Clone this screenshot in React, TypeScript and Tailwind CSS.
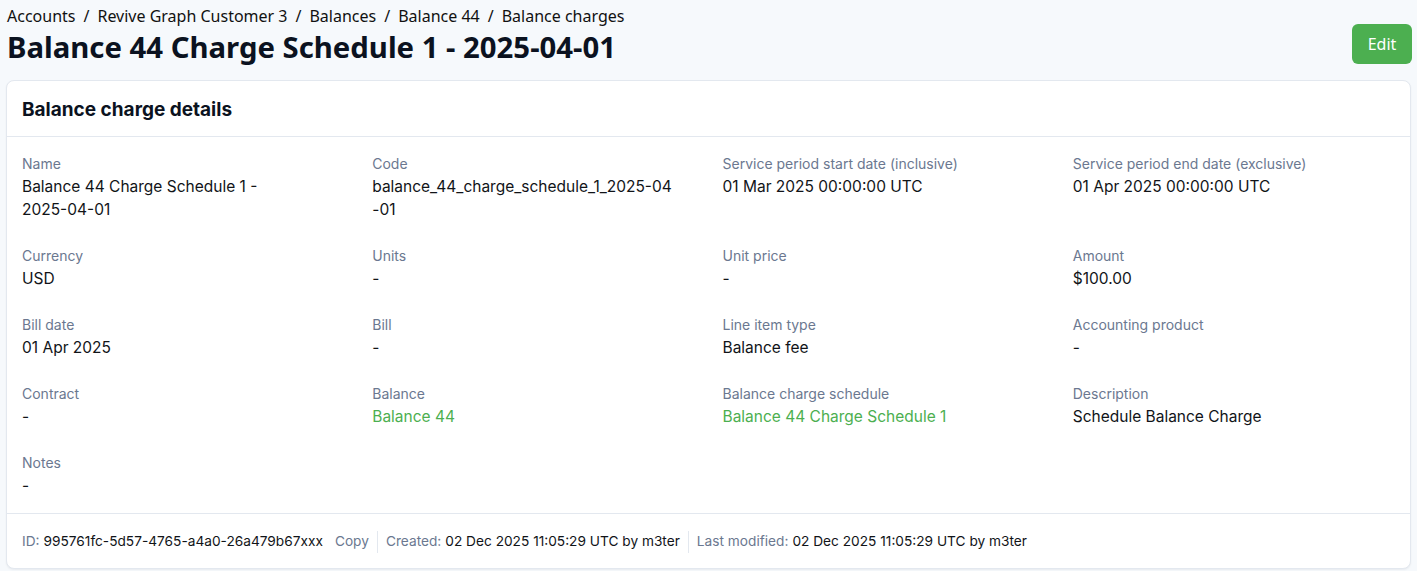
import React from 'react';

type Field = { label: string; value: React.ReactNode; link?: boolean; code?: boolean };

const fields: Field[] = [
  {
    label: 'Name',
    value: (
      <>
        Balance 44 Charge Schedule 1 - <span className="whitespace-nowrap">2025-04-01</span>
      </>
    ),
  },
  { label: 'Code', value: 'balance_44_charge_schedule_1_2025-04-01', code: true },
  { label: 'Service period start date (inclusive)', value: '01 Mar 2025 00:00:00 UTC' },
  { label: 'Service period end date (exclusive)', value: '01 Apr 2025 00:00:00 UTC' },
  { label: 'Currency', value: 'USD' },
  { label: 'Units', value: '-' },
  { label: 'Unit price', value: '-' },
  { label: 'Amount', value: '$100.00' },
  { label: 'Bill date', value: '01 Apr 2025' },
  { label: 'Bill', value: '-' },
  { label: 'Line item type', value: 'Balance fee' },
  { label: 'Accounting product', value: '-' },
  { label: 'Contract', value: '-' },
  { label: 'Balance', value: 'Balance 44', link: true },
  { label: 'Balance charge schedule', value: 'Balance 44 Charge Schedule 1', link: true },
  { label: 'Description', value: 'Schedule Balance Charge' },
  { label: 'Notes', value: '-' },
];

const crumbs = ['Accounts', 'Revive Graph Customer 3', 'Balances', 'Balance 44', 'Balance charges'];

export default function App() {
  return (
    <div className="min-h-[571px] bg-[#f6f9fc] px-[6px] pt-[5px] pb-[2px] font-['Inter',sans-serif] text-[#111418]">
      {/* Header */}
      <div className="flex items-start justify-between">
        <div className="pl-[1px]">
          <div className="font-['Noto_Sans',sans-serif] text-[16px] leading-[22px] text-[#111]">
            {crumbs.map((c, i) => (
              <span key={c}>
                {i > 0 && <span className="mx-[8px]">/</span>}
                {c}
              </span>
            ))}
          </div>
          <h1 className="mt-0 font-['Noto_Sans',sans-serif] text-[29.3px] font-bold leading-[40px] text-[#0b1220]">
            Balance 44 Charge Schedule 1 - 2025-04-01
          </h1>
        </div>
        <button className="mt-[19px] mr-[-1px] h-[40px] w-[60px] rounded-[6px] bg-[#4caf50] font-['Noto_Sans',sans-serif] text-[16px] text-white">
          Edit
        </button>
      </div>

      {/* Card */}
      <div className="mt-[13px] rounded-[8px] border border-[#e3e8ef] bg-white shadow-[0_1px_2px_rgba(16,24,40,0.06)]">
        <div className="flex h-[56px] items-center border-b border-[#e3e8ef] px-[15px] pt-[3px]">
          <h2 className="text-[19px] font-bold text-[#0b1220]">Balance charge details</h2>
        </div>

        <div className="grid grid-cols-4 gap-x-[28px] gap-y-[24px] px-[15px] pt-[16px] pb-[16px]">
          {fields.map((f) => (
            <div key={f.label} className="pr-[2px]">
              <div className="text-[14px] leading-[22px] text-[#6b7890]">{f.label}</div>
              <div
                className={`text-[15.5px] leading-[23px] ${
                  f.code ? 'max-w-[305px] break-all' : 'break-words'
                } ${f.link ? 'text-[#4caf50]' : 'text-[#111418]'}`}
              >
                {f.value}
              </div>
            </div>
          ))}
        </div>

        <div className="flex h-[55px] items-center border-t border-[#e3e8ef] px-[15px] pt-[1px] text-[13.7px]">
          <span className="text-[#6b7890]">ID:</span>
          <span className="ml-[4px] text-[#111418]">995761fc-5d57-4765-a4a0-26a479b67xxx</span>
          <span className="ml-[12px] text-[#6b7890]">Copy</span>
          <span className="mx-[8px] h-[22px] w-px bg-[#e3e8ef]" />
          <span className="text-[#6b7890]">Created:</span>
          <span className="ml-[4px] text-[#111418]">02 Dec 2025 11:05:29 UTC by m3ter</span>
          <span className="mx-[8px] h-[22px] w-px bg-[#e3e8ef]" />
          <span className="text-[#6b7890]">Last modified:</span>
          <span className="ml-[4px] text-[#111418]">02 Dec 2025 11:05:29 UTC by m3ter</span>
        </div>
      </div>
    </div>
  );
}
